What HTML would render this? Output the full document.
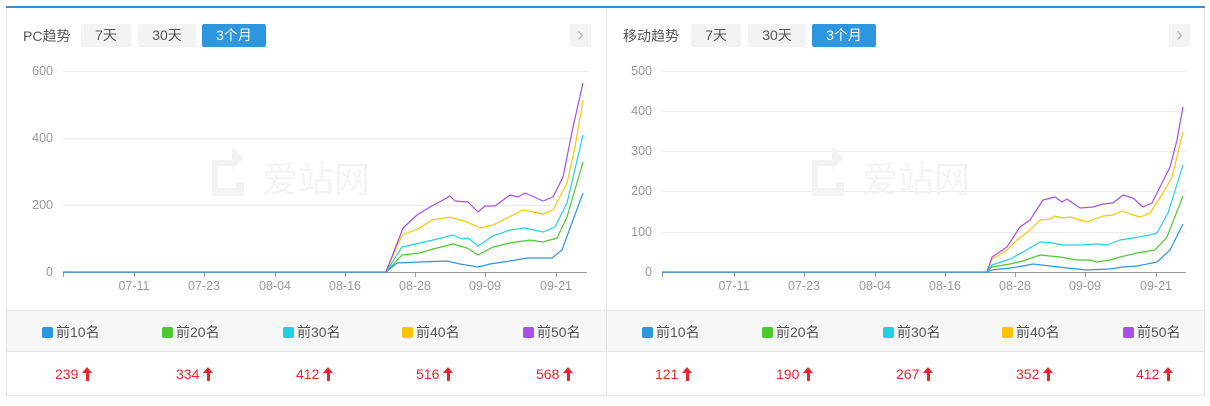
<!DOCTYPE html>
<html><head><meta charset="utf-8"><style>
*{margin:0;padding:0;box-sizing:border-box}
body{width:1210px;height:406px;background:#fff;font-family:"Liberation Sans","Noto Sans CJK SC",sans-serif;position:relative;overflow:hidden}
.top{position:absolute;left:6px;top:6px;width:1199px;height:2px;background:#3a8fc6}
.panel{position:absolute;top:8px;height:388px;border-left:1px solid #e3e3e3;border-right:1px solid #e3e3e3;border-bottom:1px solid #e3e3e3}
.title{position:absolute;top:18px;font-size:14px;color:#555}
.tab{position:absolute;top:16px;height:23px;line-height:23px;text-align:center;font-size:14px;color:#555;background:#f3f3f3;border-radius:2px}
.tab.on{background:#2d96e0;color:#fff}
.chev{position:absolute;top:16px;width:21px;height:23px;background:#f3f3f3;color:#bbb;font-size:20px;text-align:center;line-height:22px}
.leg{position:absolute;left:0;right:0;top:302px;height:42px;background:#f7f7f7;border-top:1px solid #e6e6e6;border-bottom:1px solid #e6e6e6}
.li{position:absolute;top:13px;font-size:14px;color:#555;line-height:16px}
.li i{display:inline-block;width:11px;height:11px;border-radius:2px;vertical-align:-1px;margin-right:3px}
.val{position:absolute;top:358px;font-size:14px;color:#e5262d;line-height:16px}
.val b{display:inline-block;position:relative;width:10px;height:14px;vertical-align:-2px;margin-left:4px}
.val b:before{content:"";position:absolute;left:0;top:0;border-left:5px solid transparent;border-right:5px solid transparent;border-bottom:6px solid #e5262d}
.val b:after{content:"";position:absolute;left:3.5px;top:5px;width:3px;height:9px;background:#e5262d}
svg{position:absolute;left:0;top:0}
</style></head><body>
<div class="top"></div>
<div class="panel" style="left:6px;width:601px">
 <div class="title" style="left:16px">PC趋势</div>
 <div class="tab" style="left:74px;width:50px">7天</div>
 <div class="tab" style="left:131px;width:58px">30天</div>
 <div class="tab on" style="left:195px;width:64px">3个月</div>
 <div class="chev" style="left:563px">&#x203A;</div>
 <div class="leg">
  <div class="li" style="left:35px"><i style="background:#2d96e0"></i>前10名</div>
  <div class="li" style="left:155px"><i style="background:#4cc92f"></i>前20名</div>
  <div class="li" style="left:276px"><i style="background:#22d1e0"></i>前30名</div>
  <div class="li" style="left:395px"><i style="background:#f7c600"></i>前40名</div>
  <div class="li" style="left:516px"><i style="background:#a94fe6"></i>前50名</div>
 </div>
 <div class="val" style="left:48px">239<b></b></div>
 <div class="val" style="left:169px">334<b></b></div>
 <div class="val" style="left:289px">412<b></b></div>
 <div class="val" style="left:409px">516<b></b></div>
 <div class="val" style="left:529px">568<b></b></div>
</div>
<div class="panel" style="left:606px;width:599px">
 <div class="title" style="left:16px">移动趋势</div>
 <div class="tab" style="left:84px;width:50px">7天</div>
 <div class="tab" style="left:141px;width:58px">30天</div>
 <div class="tab on" style="left:205px;width:64px">3个月</div>
 <div class="chev" style="left:562px">&#x203A;</div>
 <div class="leg">
  <div class="li" style="left:35px"><i style="background:#2d96e0"></i>前10名</div>
  <div class="li" style="left:155px"><i style="background:#4cc92f"></i>前20名</div>
  <div class="li" style="left:276px"><i style="background:#22d1e0"></i>前30名</div>
  <div class="li" style="left:395px"><i style="background:#f7c600"></i>前40名</div>
  <div class="li" style="left:516px"><i style="background:#a94fe6"></i>前50名</div>
 </div>
 <div class="val" style="left:48px">121<b></b></div>
 <div class="val" style="left:169px">190<b></b></div>
 <div class="val" style="left:289px">267<b></b></div>
 <div class="val" style="left:409px">352<b></b></div>
 <div class="val" style="left:529px">412<b></b></div>
</div>
<svg width="1210" height="406" font-family="Liberation Sans, sans-serif" font-size="12.5" fill="#999">
 <g stroke="#ececec" stroke-width="1">
  <path d="M63 71.5H587M63 138.5H587M63 205.5H587"/>
  <path d="M662 71.5H1186M662 111.5H1186M662 151.5H1186M662 191.5H1186M662 232.5H1186"/>
 </g>
 <g fill="#f4f4f4" font-size="36" font-family="Liberation Sans, Noto Sans CJK SC, sans-serif">
  <path d="M212 160h20v-14l12 12-12 12v-4h-14v22h18v-6h8v14h-32z" fill="#f3f3f3"/>
  <text x="262" y="192">爱站网</text>
  <path d="M812 160h20v-14l12 12-12 12v-4h-14v22h18v-6h8v14h-32z" fill="#f3f3f3"/>
  <text x="862" y="192">爱站网</text>
 </g>
 <g stroke="#999" stroke-width="1">
  <path d="M63 272.5H587M63.5 272v5M134.5 272v5M204.5 272v5M275.5 272v5M345.5 272v5M415.5 272v5M485.5 272v5M556.5 272v5"/>
  <path d="M662 272.5H1186M662.5 272v5M734.5 272v5M804.5 272v5M875.5 272v5M945.5 272v5M1015.5 272v5M1085.5 272v5M1156.5 272v5"/>
 </g>
 <g text-anchor="end">
  <text x="53" y="75">600</text><text x="53" y="142">400</text><text x="53" y="209">200</text><text x="53" y="276">0</text>
  <text x="652" y="75">500</text><text x="652" y="115">400</text><text x="652" y="155">300</text><text x="652" y="195">200</text><text x="652" y="236">100</text><text x="652" y="276">0</text>
 </g>
 <g text-anchor="middle">
  <text x="134" y="290">07-11</text><text x="204" y="290">07-23</text><text x="275" y="290">08-04</text><text x="345" y="290">08-16</text><text x="415" y="290">08-28</text><text x="485" y="290">09-09</text><text x="556" y="290">09-21</text>
  <text x="734" y="290">07-11</text><text x="804" y="290">07-23</text><text x="875" y="290">08-04</text><text x="945" y="290">08-16</text><text x="1015" y="290">08-28</text><text x="1085" y="290">09-09</text><text x="1156" y="290">09-21</text>
 </g>
 <g fill="none" stroke-width="1.2" stroke-linejoin="round">
  <path stroke="#2d96e0" d="M63 272H386L397 263L420 262L447 261L460 264L478 267L490 264L510 261L527 258L552 258L562 250L573 220L583 193"/>
  <path stroke="#4cc92f" d="M386 272L402 255L420 253L433 249L453 244L467 248L478 255L493 247L510 243L530 240L543 242L557 238L567 217L583 162"/>
  <path stroke="#22d1e0" d="M386 272L402 247L420 243L433 240L453 235L462 239L468 238L478 246L493 236L510 230L525 228L543 232L555 227L567 203L583 135"/>
  <path stroke="#f7c600" d="M386 272L402 235L420 228L432 220L450 217L467 222L480 228L493 225L507 218L523 210L543 214L553 210L567 183L575 147L583 100"/>
  <path stroke="#a94fe6" d="M386 272L403 228L417 215L430 207L443 200L450 196L455 201L468 202L478 212L485 206L495 206L510 195L518 197L525 193L543 201L553 197L563 177L573 127L583 83"/>
  <path stroke="#2d96e0" d="M662 272H987L992 270L1010 268L1023 266L1033 264L1050 266L1067 268L1087 270L1110 269L1123 267L1137 266L1157 262L1170 250L1180 230L1183 224"/>
  <path stroke="#4cc92f" d="M987 272L992 267L1010 264L1023 261L1040 255L1060 257L1077 260L1090 260L1097 262L1110 260L1120 257L1137 253L1155 250L1167 237L1183 196"/>
  <path stroke="#22d1e0" d="M987 272L992 265L1010 259L1023 252L1040 242L1053 243L1062 245L1080 245L1097 244L1107 245L1120 240L1133 238L1150 235L1157 233L1168 213L1183 165"/>
  <path stroke="#f7c600" d="M987 272L992 259L1007 250L1017 240L1030 230L1040 220L1050 219L1055 216L1062 218L1070 217L1087 222L1103 216L1113 215L1122 211L1130 214L1140 217L1150 213L1163 193L1172 177L1183 132"/>
  <path stroke="#a94fe6" d="M987 272L992 257L1007 247L1020 227L1030 220L1043 200L1055 197L1062 202L1067 199L1080 208L1093 207L1103 204L1113 203L1123 195L1133 198L1143 207L1152 203L1162 183L1170 167L1177 140L1183 107"/>
 </g>
</svg>
</body></html>
